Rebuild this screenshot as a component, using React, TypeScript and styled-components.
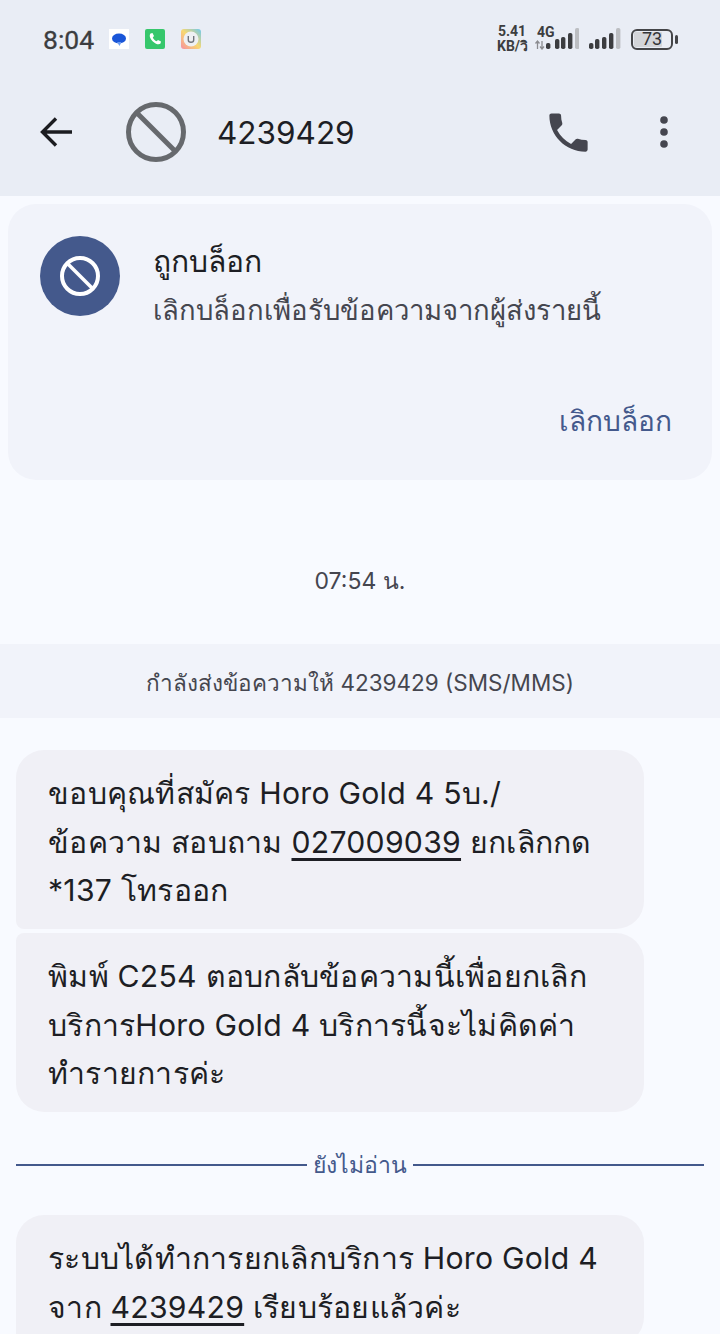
import React from "react";
import styled, { createGlobalStyle } from "styled-components";

const GlobalStyle = createGlobalStyle`
  html, body {
    margin: 0;
    padding: 0;
    background: #f8faff;
  }
  * {
    box-sizing: border-box;
  }
`;

const Screen = styled.div`
  width: 720px;
  height: 1334px;
  overflow: hidden;
  background: #f8faff;
  font-family: Inter, "Noto Sans", "DejaVu Sans", sans-serif;
  color: #1d1e24;
`;

const Header = styled.header`
  height: 196px;
  background: #e9edf5;
`;

const StatusBar = styled.div`
  height: 78px;
  display: flex;
  align-items: center;
  padding: 0 47px 0 43px;
`;

const Clock = styled.span`
  font-family: Roboto, sans-serif;
  font-size: 26.5px;
  font-weight: 400;
  -webkit-text-stroke: 0.3px #3c3d40;
  color: #3c3d40;
  margin-right: 15px;
`;

const AppIcons = styled.div`
  display: flex;
  gap: 16px;
`;

const AppIcon = styled.svg`
  width: 20px;
  height: 20px;
  display: block;
`;

const StatusRight = styled.div`
  margin-left: auto;
  display: flex;
  align-items: center;
`;

const Speed = styled.div`
  font-family: Roboto, sans-serif;
  font-size: 14px;
  font-weight: 700;
  line-height: 15px;
  color: #3c3d40;
  text-align: center;
  white-space: nowrap;
  width: 30px;
  margin-right: 8px;
`;

const SignalGroup = styled.div`
  position: relative;
  margin-right: 9px;
`;

const NetLabel = styled.span`
  position: absolute;
  left: 2px;
  top: -4px;
  font-family: Roboto, sans-serif;
  font-size: 14px;
  line-height: 16px;
  font-weight: 700;
  color: #3c3d40;
`;

const Signal = styled.svg`
  display: block;
`;

const Battery = styled.div`
  width: 42px;
  height: 21px;
  margin-left: 10px;
  border: 2px solid #444548;
  border-radius: 6px;
  position: relative;
  display: flex;
  align-items: center;
  justify-content: center;
  font-family: Roboto, sans-serif;
  font-size: 18px;
  color: #333438;
  &::after {
    content: "";
    position: absolute;
    right: -7px;
    top: 4px;
    width: 3px;
    height: 9px;
    border-radius: 2px;
    background: #444548;
  }
`;

const BatteryFill = styled.div<{ $level: number }>`
  position: absolute;
  left: 1px;
  top: 1px;
  bottom: 1px;
  width: ${(p) => p.$level}%;
  background: #d3d5d9;
  border-radius: 1px;
`;

const BatteryLabel = styled.span`
  position: relative;
  line-height: 1;
`;

const Toolbar = styled.div`
  height: 118px;
  display: flex;
  align-items: center;
  padding: 0 0 10px 40px;
`;

const BackButton = styled.svg`
  width: 32px;
  height: 32px;
  margin-right: 54px;
  display: block;
`;

const BlockedAvatar = styled.svg`
  width: 60px;
  height: 60px;
  margin-right: 31px;
  display: block;
`;

const Number = styled.h1`
  margin: 0;
  font-size: 31.5px;
  font-weight: 400;
  flex: 1;
`;

const ToolbarIcon = styled.svg`
  display: block;
`;

const ToolbarActions = styled.div`
  display: flex;
  align-items: center;
  gap: 65px;
  padding-right: 51px;
`;

const BlockCard = styled.section`
  margin: 8px 8px 0;
  height: 276px;
  padding: 32px 40px 0 32px;
  border-radius: 28px;
  background: #f1f3fa;
  display: flex;
  flex-direction: column;
`;

const BlockRow = styled.div`
  display: flex;
  gap: 33px;
`;

const BlockBadge = styled.div`
  width: 80px;
  height: 80px;
  border-radius: 50%;
  background: #44598c;
  display: flex;
  align-items: center;
  justify-content: center;
  flex: none;
`;

const BlockGlyph = styled.svg`
  width: 40px;
  height: 40px;
  display: block;
`;

const BlockTitle = styled.div`
  font-size: 30px;
  line-height: 44px;
  margin-top: 3px;
  color: #1d1e24;
`;

const BlockText = styled.div`
  font-size: 27.5px;
  line-height: 36px;
  margin-top: 9px;
  color: #45464f;
`;

const UnblockAction = styled.div`
  margin-top: auto;
  margin-bottom: 39px;
  text-align: right;
  font-size: 28.1px;
  line-height: 40px;
  color: #44598c;
`;

const TimeStamp = styled.div`
  margin-top: 86px;
  text-align: center;
  font-size: 23px;
  line-height: 30px;
  color: #45464f;
`;

const SendingBand = styled.div`
  margin-top: 48px;
  height: 74px;
  padding-top: 3px;
  background: #f1f3fa;
  display: flex;
  align-items: center;
  justify-content: center;
  font-size: 22.5px;
  color: #45464f;
`;

const Thread = styled.div`
  padding: 32px 16px 0;
  display: flex;
  flex-direction: column;
`;

const Bubble = styled.div<{ $joined?: boolean }>`
  width: 628px;
  padding: 19px 32px 14px;
  margin-top: ${(p) => (p.$joined ? "4px" : "0")};
  border-radius: ${(p) => (p.$joined ? "8px 28px 28px 28px" : "28px 28px 28px 8px")};
  background: #f0f0f6;
  font-size: 30.2px;
  letter-spacing: 0.25px;
  line-height: 48.67px;
  white-space: nowrap;
  color: #1d1e24;
`;

const LinkText = styled.span`
  text-decoration: underline;
  text-decoration-thickness: 2.5px;
  text-underline-offset: 5px;
`;

const UnreadDivider = styled.div`
  margin: 38px 0 35px;
  display: flex;
  align-items: center;
  gap: 6px;
  font-size: 23px;
  line-height: 30px;
  color: #44598c;
  &::before,
  &::after {
    content: "";
    flex: 1;
    height: 2px;
    background: #44598c;
  }
`;

const barHeights = [6, 10, 12, 16, 21];

const Bars = ({ xs }: { xs: number[] }) => (
  <>
    {xs.map((x, i) => (
      <rect
        key={x}
        x={x - 2}
        y={21 - barHeights[i]}
        width="4.4"
        height={barHeights[i]}
        rx="1.8"
        fill={i === 4 ? "#bcbec2" : "#3c3d40"}
      />
    ))}
  </>
);

export default function App() {
  return (
    <Screen>
      <GlobalStyle />
      <Header>
        <StatusBar>
          <Clock>8:04</Clock>
          <AppIcons>
            <AppIcon viewBox="0 0 20 20">
              <rect width="20" height="20" fill="#fff" />
              <ellipse cx="10" cy="9.5" rx="7" ry="5" fill="#1a56d8" />
              <path d="M8 13 L12.5 13 L10.5 17 Z" fill="#6d9df0" />
            </AppIcon>
            <AppIcon viewBox="0 0 20 20">
              <rect width="20" height="20" rx="2" fill="#36c76c" />
              <path
                d="M5.5 4.5 L7.5 4 L9 7 L7.8 8.4 C8.5 10 10 11.5 11.6 12.2 L13 11 L16 12.5 L15.5 14.5 C14.5 15.5 13 15.6 11 14.7 C8.3 13.4 6.5 11.5 5.3 9 C4.5 7.2 4.6 5.6 5.5 4.5 Z"
                fill="#fff"
              />
            </AppIcon>
            <AppIcon viewBox="0 0 20 20">
              <defs>
                <linearGradient id="rim" x1="0" y1="1" x2="1" y2="0">
                  <stop offset="0" stopColor="#f58fa0" />
                  <stop offset="0.5" stopColor="#f8d870" />
                  <stop offset="1" stopColor="#6cc9ee" />
                </linearGradient>
              </defs>
              <rect width="20" height="20" rx="3" fill="url(#rim)" />
              <circle cx="10" cy="10" r="7.5" fill="#eef0f3" />
              <path d="M7.3 7 V11 C7.3 14 12.7 14 12.7 11 V7" fill="none" stroke="#70747c" strokeWidth="1.4" />
            </AppIcon>
          </AppIcons>
          <StatusRight>
            <Speed>
              5.41
              <br />
              KB/วิ
            </Speed>
            <SignalGroup>
              <NetLabel>4G</NetLabel>
              <Signal width="44" height="22" viewBox="0 0 44 22">
                {/* data in/out arrows beside the 4G bars */}
                <path d="M2.5 21 V13 M0.5 15.5 L2.5 13 L4.5 15.5 M7 13 V21 M5 18.5 L7 21 L9 18.5" stroke="#8b8c90" strokeWidth="1.3" fill="none" />
                <Bars xs={[13, 22, 28, 35, 42]} />
              </Signal>
            </SignalGroup>
            <Signal width="33" height="22" viewBox="0 0 33 22">
              <Bars xs={[3, 9, 16, 23, 30]} />
            </Signal>
            <Battery>
              <BatteryFill $level={73} />
              <BatteryLabel>73</BatteryLabel>
            </Battery>
          </StatusRight>
        </StatusBar>
        <Toolbar>
          <BackButton viewBox="0 0 32 32" fill="none">
            <path d="M32 16 H3 M16 2.5 L2.5 16 L16 29.5" stroke="#1b1c20" strokeWidth="3.4" />
          </BackButton>
          <BlockedAvatar viewBox="0 0 60 60" fill="none">
            <circle cx="30" cy="30" r="27.5" stroke="#66696d" strokeWidth="5" />
            <path d="M11 11 L49 49" stroke="#66696d" strokeWidth="5" />
          </BlockedAvatar>
          <Number>4239429</Number>
          <ToolbarActions>
            <ToolbarIcon width="51" height="51" viewBox="0 0 24 24">
              <path
                fill="#45464f"
                d="M6.62 10.79c1.44 2.83 3.76 5.14 6.59 6.59l2.2-2.2c.27-.27.67-.36 1.02-.24 1.12.37 2.33.57 3.57.57.55 0 1 .45 1 1V20c0 .55-.45 1-1 1-9.39 0-17-7.61-17-17 0-.55.45-1 1-1h3.5c.55 0 1 .45 1 1 0 1.25.2 2.45.57 3.57.11.35.03.74-.25 1.02l-2.2 2.2z"
              />
            </ToolbarIcon>
            <ToolbarIcon width="10" height="34" viewBox="0 0 10 34">
              <circle cx="5" cy="5" r="3.8" fill="#45464f" />
              <circle cx="5" cy="17" r="3.8" fill="#45464f" />
              <circle cx="5" cy="29" r="3.8" fill="#45464f" />
            </ToolbarIcon>
          </ToolbarActions>
        </Toolbar>
      </Header>

      <BlockCard>
        <BlockRow>
          <BlockBadge>
            <BlockGlyph viewBox="0 0 40 40" fill="none">
              <circle cx="20" cy="20" r="18" stroke="#fff" strokeWidth="4" />
              <path d="M7.5 7.5 L32.5 32.5" stroke="#fff" strokeWidth="3.6" />
            </BlockGlyph>
          </BlockBadge>
          <div>
            <BlockTitle>ถูกบล็อก</BlockTitle>
            <BlockText>เลิกบล็อกเพื่อรับข้อความจากผู้ส่งรายนี้</BlockText>
          </div>
        </BlockRow>
        <UnblockAction>เลิกบล็อก</UnblockAction>
      </BlockCard>

      <TimeStamp>07:54 น.</TimeStamp>
      <SendingBand>กำลังส่งข้อความให้ 4239429 (SMS/MMS)</SendingBand>

      <Thread>
        <Bubble>
          ขอบคุณที่สมัคร Horo Gold 4 5บ./
          <br />
          ข้อความ สอบถาม <LinkText>027009039</LinkText> ยกเลิกกด
          <br />
          *137 โทรออก
        </Bubble>
        <Bubble $joined>
          พิมพ์ C254 ตอบกลับข้อความนี้เพื่อยกเลิก
          <br />
          บริการHoro Gold 4 บริการนี้จะไม่คิดค่า
          <br />
          ทำรายการค่ะ
        </Bubble>
        <UnreadDivider>ยังไม่อ่าน</UnreadDivider>
        <Bubble>
          ระบบได้ทำการยกเลิกบริการ Horo Gold 4
          <br />
          จาก <LinkText>4239429</LinkText> เรียบร้อยแล้วค่ะ
        </Bubble>
      </Thread>
    </Screen>
  );
}
